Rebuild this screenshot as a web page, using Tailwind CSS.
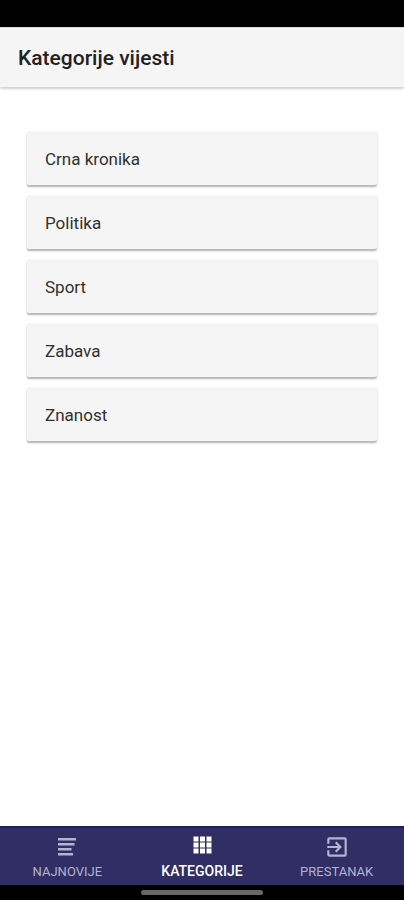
<!DOCTYPE html>
<html lang="hr">
<head>
<meta charset="utf-8">
<meta name="viewport" content="width=device-width, initial-scale=1">
<title>Kategorije vijesti</title>
<script src="https://cdn.jsdelivr.net/npm/@tailwindcss/browser@4"></script>
</head>
<body class="flex min-h-screen flex-col bg-white font-[Roboto,sans-serif] text-[#222222]">
<div class="h-[27px] bg-black"></div>
<header class="flex h-[60px] items-center border-t border-[#dcdcdc] bg-[#f5f5f5] px-[18px] shadow-[0_2px_2px_rgba(0,0,0,0.18)]">
  <h1 class="text-[21px] leading-6 font-medium">Kategorije vijesti</h1>
</header>
<main class="flex-1 px-[27px] pt-11">
  <ul class="flex flex-col gap-[10px]">
    <li><a href="#crna-kronika" class="flex h-[54px] items-center rounded-[2px] bg-[#f5f5f5] px-[18px] pt-[2px] text-[17px] leading-6 text-[#303030] shadow-[0_2px_2px_rgba(0,0,0,0.3)]">Crna kronika</a></li>
    <li><a href="#politika" class="flex h-[54px] items-center rounded-[2px] bg-[#f5f5f5] px-[18px] pt-[2px] text-[17px] leading-6 text-[#303030] shadow-[0_2px_2px_rgba(0,0,0,0.3)]">Politika</a></li>
    <li><a href="#sport" class="flex h-[54px] items-center rounded-[2px] bg-[#f5f5f5] px-[18px] pt-[2px] text-[17px] leading-6 text-[#303030] shadow-[0_2px_2px_rgba(0,0,0,0.3)]">Sport</a></li>
    <li><a href="#zabava" class="flex h-[54px] items-center rounded-[2px] bg-[#f5f5f5] px-[18px] pt-[2px] text-[17px] leading-6 text-[#303030] shadow-[0_2px_2px_rgba(0,0,0,0.3)]">Zabava</a></li>
    <li><a href="#znanost" class="flex h-[54px] items-center rounded-[2px] bg-[#f5f5f5] px-[18px] pt-[2px] text-[17px] leading-6 text-[#303030] shadow-[0_2px_2px_rgba(0,0,0,0.3)]">Znanost</a></li>
  </ul>
</main>
<nav class="grid h-[59px] grid-cols-3 border-t-2 border-[#201c60] bg-[#302e65] text-[#b4b3d0]">
  <a href="#najnovije" class="flex flex-col items-center justify-end gap-1 pb-[5px]">
    <svg class="size-[26px]" viewBox="0 0 26 26" fill="currentColor" aria-hidden="true"><path d="M4 4h18v2.6H4zM4 9h16.5v2.6H4zM4 14h13.5v2.6H4zM4 19h15v2.4H4z"/></svg>
    <span class="text-[13px] leading-4">NAJNOVIJE</span>
  </a>
  <a href="#kategorije" aria-current="page" class="flex flex-col items-center justify-end gap-1 pb-[6px] text-white">
    <svg class="size-[26px]" viewBox="0 0 26 26" fill="currentColor" aria-hidden="true"><path d="M4.500 3.500h5v5h-5zM11 3.500h5v5h-5zM17.500 3.500h5v5h-5zM4.500 9.500h5v5h-5zM11 9.500h5v5h-5zM17.500 9.500h5v5h-5zM4.500 15.500h5v5h-5zM11 15.500h5v5h-5zM17.500 15.500h5v5h-5z"/></svg>
    <span class="text-[14px] leading-4 font-medium">KATEGORIJE</span>
  </a>
  <a href="#prestanak" class="flex flex-col items-center justify-end gap-1 pb-[5px]">
    <svg class="size-[26px]" viewBox="0 0 24 24" fill="currentColor" aria-hidden="true"><path d="M10.090 15.590 11.500 17l5-5-5-5-1.410 1.410L12.670 11H3v2h9.670zM19 3H5a2 2 0 0 0-2 2v4h2V5h14v14H5v-4H3v4a2 2 0 0 0 2 2h14a2 2 0 0 0 2-2V5a2 2 0 0 0-2-2z"/></svg>
    <span class="text-[13px] leading-4">PRESTANAK</span>
  </a>
</nav>
<div class="flex h-[15px] items-center justify-center bg-black"><div class="h-[5px] w-[122px] rounded-full bg-[#686868]"></div></div>
</body>
</html>
